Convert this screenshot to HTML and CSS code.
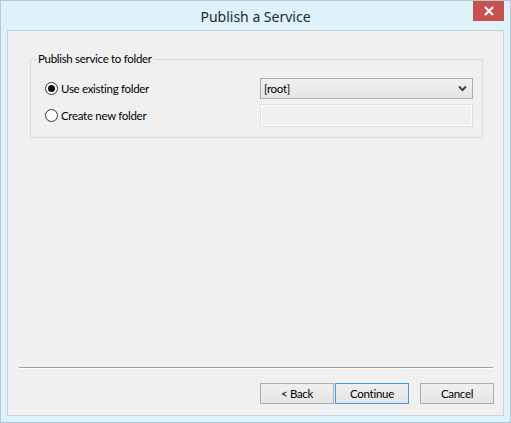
FILE: index.html
```html
<!DOCTYPE html>
<html>
<head>
<meta charset="utf-8">
<link rel="stylesheet" href="styles.css">
</head>
<body>
<div class="window">
  <div class="titlebar">
    <div class="tb-side"></div>
    <div class="title">Publish a Service</div>
    <div class="tb-side tb-right">
      <div class="close">
        <svg width="10" height="10" viewBox="0 0 10 10"><path d="M1 1 L9 9 M9 1 L1 9" stroke="#fff" stroke-width="2.2" fill="none"/></svg>
      </div>
    </div>
  </div>
  <div class="client">
    <div class="group">
      <div class="legend">Publish service to folder</div>
      <div class="row row1">
        <label class="radio"><span class="dot checked"></span>Use existing folder</label>
        <div class="select"><span>[root]</span>
          <svg width="9" height="7" viewBox="0 0 9 7"><path d="M1 1.5 L4.5 5 L8 1.5" stroke="#444" stroke-width="2" fill="none"/></svg>
        </div>
      </div>
      <div class="row row2">
        <label class="radio"><span class="dot"></span>Create new folder</label>
        <div class="textbox"></div>
      </div>
    </div>
    <div class="spacer"></div>
    <div class="sep"></div>
    <div class="buttons">
      <div class="btn">&lt; Back</div>
      <div class="btn default">Continue</div>
      <div class="btn cancel">Cancel</div>
    </div>
  </div>
</div>
</body>
</html>
```
FILE: styles.css
```css
* { box-sizing: border-box; }
html, body { margin: 0; padding: 0; }
body {
  width: 511px; height: 423px; overflow: hidden;
  font-family: "Segoe UI", "Lato", "Noto Sans", sans-serif;
  font-size: 11.5px; letter-spacing: -0.3px; color: #000;
}
.window {
  width: 511px; height: 423px;
  background: #dff1f9;
  border: 1px solid #b3cad6;
  padding: 0 6px 6px 6px;
  display: flex; flex-direction: column;
}
.titlebar {
  height: 29px;
  display: grid;
  grid-template-columns: 1fr auto 1fr;
  flex: none;
}
.title {
  font-family: "Segoe UI", "Noto Sans", sans-serif;
  font-size: 14px; color: #1b2b36; letter-spacing: 0;
  line-height: 30px;
  padding-top: 1px;
}
.tb-right { display: flex; justify-content: flex-end; }
.close {
  width: 31px; height: 20px;
  background: #c75050;
  display: flex; align-items: center; justify-content: center;
}
.client {
  flex: 1;
  background: #f0f0f0;
  border: 1px solid #c3d4de;
  display: flex; flex-direction: column;
  padding: 0 9px 11px 11px;
}
.group {
  margin: 28px 11px 0 11px;
  border: 1px solid #dcdcdc;
  height: 79px;
  position: relative;
  padding: 18px 9px 0 14px;
}
.legend {
  position: absolute; top: -9px; left: 5px;
  background: #f0f0f0; padding: 0 2px;
  line-height: 16px;
}
.row { display: flex; align-items: center; justify-content: space-between; }
.row1 { height: 21px; }
.row2 { height: 23px; margin-top: 5px; }
.radio { display: flex; align-items: center; gap: 3px; }
.dot {
  width: 13px; height: 13px; border-radius: 50%;
  border: 1px solid #333; background: #fff;
  display: flex; align-items: center; justify-content: center;
}
.dot.checked::after {
  content: ""; width: 7px; height: 7px; border-radius: 50%; background: #111;
}
.select {
  width: 213px; height: 21px;
  border: 1px solid #acacac;
  background: linear-gradient(#f0f0f0, #e5e5e5);
  display: flex; align-items: center; justify-content: space-between;
  padding: 0 5px 0 3px;
}
.textbox {
  width: 213px; height: 23px;
  border: 1px solid #e0e0e0;
  background: #f0f0f0;
  box-shadow: inset 0 0 0 1px #fcfcfc;
}
.spacer { flex: 1; }
.sep {
  height: 2px;
  margin-right: 1px;
  border-top: 1px solid #a0a0a0;
  border-bottom: 1px solid #fff;
  margin-bottom: 14px;
}
.buttons { display: flex; justify-content: flex-end; gap: 1px; }
.btn {
  width: 74px; height: 21px;
  border: 1px solid #adadad;
  background: linear-gradient(#f0f0f0, #e5e5e5);
  display: flex; align-items: center; justify-content: center;
}
.btn.default { border-color: #3c9ae8; }
.btn.cancel { margin-left: 10px; }
```
